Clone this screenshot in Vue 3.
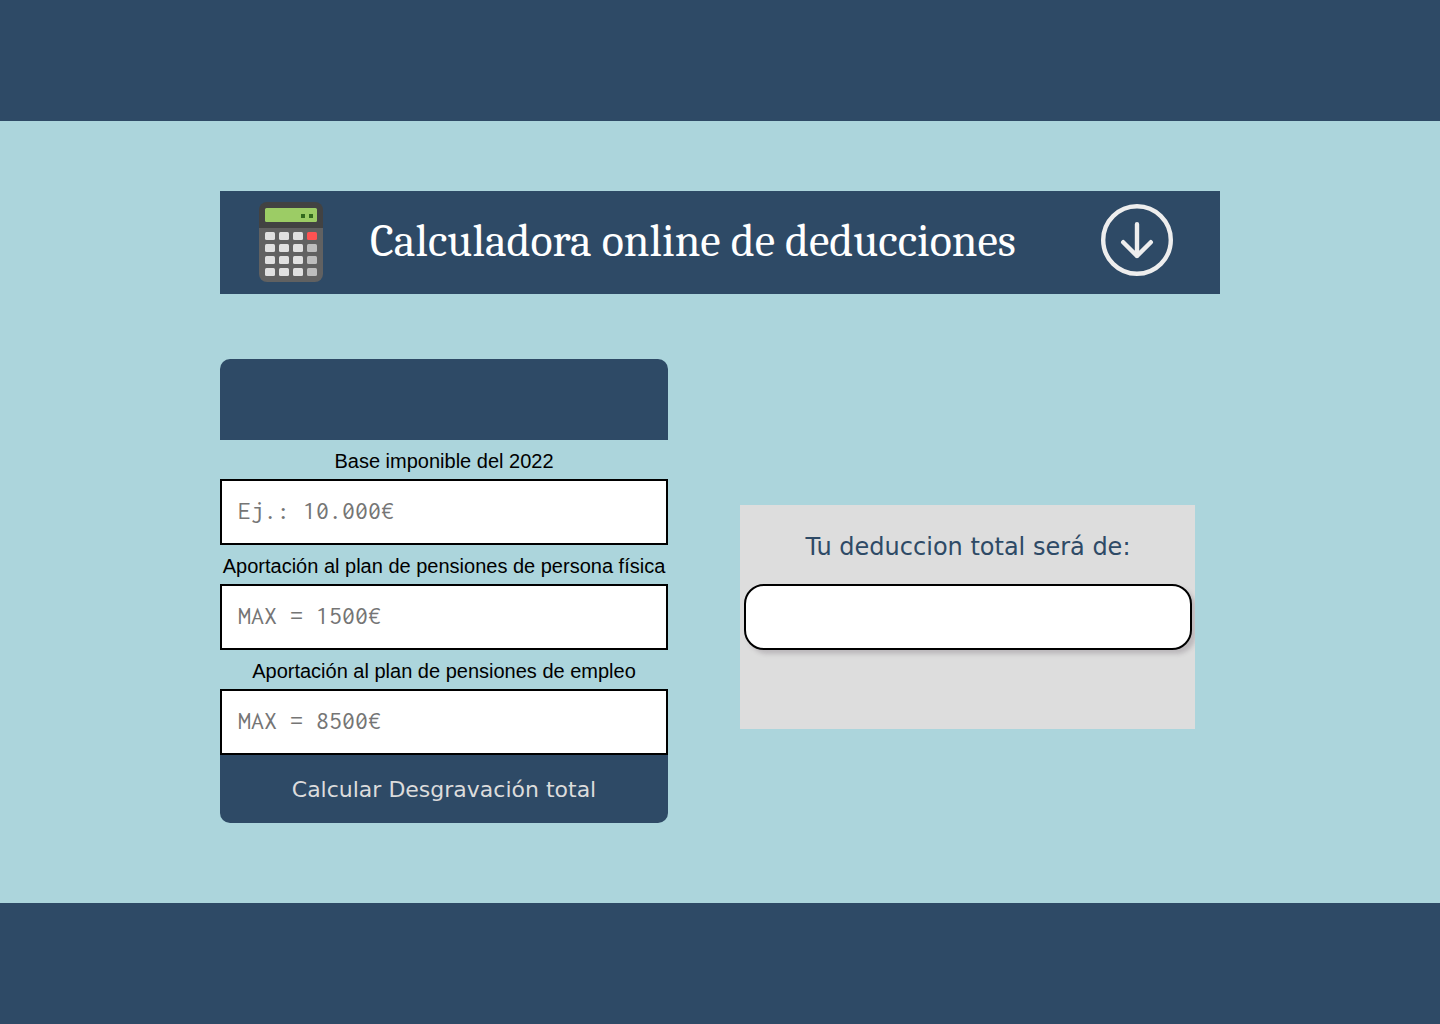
<script setup>
import { reactive, ref } from 'vue'

const fields = [
  { id: 'base', label: 'Base imponible del 2022', placeholder: 'Ej.: 10.000€' },
  { id: 'personal', label: 'Aportación al plan de pensiones de persona física', placeholder: 'MAX = 1500€' },
  { id: 'empleo', label: 'Aportación al plan de pensiones de empleo', placeholder: 'MAX = 8500€' },
]

const values = reactive({ base: '', personal: '', empleo: '' })
const total = ref('')

const rows = [0, 1, 2, 3]
const cols = [0, 1, 2, 3]

function keyColor(row, col) {
  if (col < 3) return '#e0e0e0'
  return row === 0 ? '#ff5252' : '#bdbdbd'
}

function toNumber(text) {
  return Number(String(text).replace(/[^\d,]/g, '').replace(',', '.')) || 0
}

function calculate() {
  const personal = Math.min(toNumber(values.personal), 1500)
  const empleo = Math.min(toNumber(values.empleo), 8500)
  total.value = `${Math.min(personal + empleo, toNumber(values.base) * 0.3)}€`
}
</script>

<template>
  <div class="page">
    <header class="band"></header>

    <main class="main">
      <div class="container">
        <div class="banner">
          <svg class="calculator" viewBox="0 0 64 80" aria-hidden="true">
            <path d="M0 26h64v46a8 8 0 0 1-8 8H8a8 8 0 0 1-8-8z" fill="#616161" />
            <path d="M8 0h48a8 8 0 0 1 8 8v18H0V8a8 8 0 0 1 8-8z" fill="#424242" />
            <rect x="6" y="6" width="52" height="14" rx="1.5" fill="#9ccc65" />
            <path d="M42 12h4v4h-4zM50 12h4v4h-4z" fill="#33691e" />
            <template v-for="r in rows" :key="r">
              <rect
                v-for="c in cols"
                :key="c"
                :x="6 + c * 14"
                :y="30 + r * 12"
                width="10"
                height="8"
                rx="1.5"
                :fill="keyColor(r, c)"
              />
            </template>
          </svg>
          <h1 class="title">Calculadora online de deducciones</h1>
          <svg class="arrow" viewBox="0 0 72 72" fill="none" stroke="#eeeeee" aria-hidden="true">
            <circle cx="36" cy="36" r="33.8" stroke-width="4.4" />
            <path d="M36 20.2V52M22.2 38.2L36 52l13.8-13.8" stroke-width="4.4" stroke-linecap="round" stroke-linejoin="round" />
          </svg>
        </div>

        <div class="columns">
          <form class="form" @submit.prevent="calculate">
            <div class="form-head"></div>
            <div v-for="f in fields" :key="f.id" class="field">
              <label :for="f.id" class="label">{{ f.label }}</label>
              <input :id="f.id" v-model="values[f.id]" class="box" type="text" :placeholder="f.placeholder" />
            </div>
            <button class="submit" type="submit">Calcular Desgravación total</button>
          </form>

          <section class="result">
            <label for="total" class="result-label">Tu deduccion total será de:</label>
            <input id="total" class="box result-box" type="text" :value="total" readonly />
          </section>
        </div>
      </div>
    </main>

    <footer class="band"></footer>
  </div>
</template>

<style>
body {
  margin: 0;
  background: #acd5dc;
}
</style>

<style scoped>
.page {
  display: flex;
  flex-direction: column;
  min-height: 100vh;
  font-family: "Liberation Sans", Arial, sans-serif;
  color: #000;
}

.band {
  height: 121px;
  background: #2e4a66;
}

.main {
  flex: 1;
  padding: 70px 24px 80px;
  background: #acd5dc;
}

.container {
  max-width: 1000px;
  margin: 0 auto;
}

.banner {
  display: flex;
  align-items: center;
  box-sizing: border-box;
  min-height: 103px;
  padding: 0 47px 2px 39px;
  background: #2e4a66;
}

.calculator {
  flex: none;
  width: 64px;
  height: 80px;
}

.title {
  flex: 1;
  margin: 0 0 0 47px;
  font-family: Cambria, Caladea, "Liberation Serif", serif;
  font-size: 46px;
  font-weight: 400;
  line-height: 52px;
  color: #fff;
}

.arrow {
  flex: none;
  width: 72px;
  height: 72px;
  margin-bottom: 4px;
}

.columns {
  display: flex;
  align-items: flex-start;
  gap: 72px;
  margin-top: 65px;
}

.form {
  display: flex;
  flex-direction: column;
  flex: 0 1 448px;
  border-radius: 10px;
  overflow: hidden;
}

.form-head {
  height: 81px;
  background: #2e4a66;
}

.field {
  display: flex;
  flex-direction: column;
}

.label {
  padding: 9px 0 6px;
  font-size: 20px;
  line-height: 24px;
  text-align: center;
  white-space: nowrap;
}

.box {
  box-sizing: border-box;
  width: 100%;
  height: 66px;
  padding: 0 16px 4px;
  border: 2px solid #000;
  border-radius: 0;
  background: #fff;
  font-family: Consolas, Inconsolata, "DejaVu Sans Mono", monospace;
  font-size: 26px;
}

.box::placeholder {
  color: #757575;
}

.submit {
  height: 68px;
  padding: 0;
  border: 0;
  background: #2e4a66;
  color: #dcdcdc;
  font-family: Verdana, "DejaVu Sans", sans-serif;
  font-size: 22px;
  cursor: pointer;
}

.result {
  display: flex;
  flex-direction: column;
  align-items: center;
  box-sizing: border-box;
  flex: 0 1 455px;
  min-height: 224px;
  margin-top: 146px;
  padding: 27px 3px 0 4px;
  background: #dddddd;
  overflow: hidden;
}

.result-label {
  margin-bottom: 22px;
  font-family: Verdana, "DejaVu Sans", sans-serif;
  font-size: 24px;
  line-height: 30px;
  color: #2e4a66;
}

.result-box {
  border-radius: 20px;
  box-shadow: 4px 4px 4px rgba(90, 80, 90, 0.25);
}
</style>
